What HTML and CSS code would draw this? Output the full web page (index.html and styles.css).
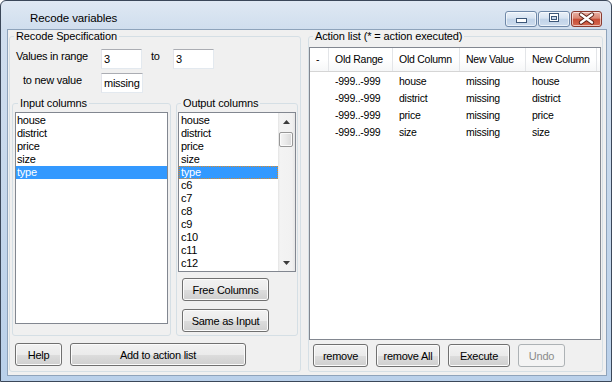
FILE: index.html
```html
<!DOCTYPE html>
<html>
<head>
<meta charset="utf-8">
<link rel="stylesheet" href="styles.css">
</head>
<body>
<div class="window">
  <div class="titlebar">
    <div class="title">Recode variables</div>
    <div class="caption">
      <div class="cap cap-min"><svg width="30" height="14" viewBox="0 0 30 14"><rect x="10.5" y="6.5" width="10" height="4" fill="#fff" stroke="#3d5778"/></svg></div>
      <div class="cap cap-max"><svg width="30" height="14" viewBox="0 0 30 14"><rect x="10.5" y="1.5" width="9" height="8" fill="#fff" stroke="#3d5778"/><rect x="12.5" y="4.5" width="5" height="3" fill="#c9d8ea" stroke="#3d5778"/></svg></div>
      <div class="cap cap-close"><svg width="29" height="14" viewBox="0 0 29 14"><path d="M9 2.5 L20 10.5 M20 2.5 L9 10.5" stroke="#5a1e14" stroke-width="4.2" stroke-linecap="round"/><path d="M9 2.5 L20 10.5 M20 2.5 L9 10.5" stroke="#fff" stroke-width="2.4" stroke-linecap="round"/></svg></div>
    </div>
  </div>
  <div class="frame">
    <div class="client">
      <fieldset class="group spec">
        <legend>Recode Specification</legend>
        <div class="row r1">
          <span class="lbl l-range">Values in range</span>
          <div class="tb">3</div>
          <span class="lbl l-to">to</span>
          <div class="tb">3</div>
        </div>
        <div class="row r2">
          <span class="lbl l-new">to new value</span>
          <div class="tb tb-wide">missing</div>
        </div>
        <div class="cols">
          <fieldset class="group incol">
            <legend>Input columns</legend>
            <div class="listbox lb-in">
              <div class="item">house</div>
              <div class="item">district</div>
              <div class="item">price</div>
              <div class="item">size</div>
              <div class="item sel">type</div>
            </div>
          </fieldset>
          <fieldset class="group outcol">
            <legend>Output columns</legend>
            <div class="listbox lb-out">
              <div class="items">
                <div class="item">house</div>
                <div class="item">district</div>
                <div class="item">price</div>
                <div class="item">size</div>
                <div class="item sel focus">type</div>
                <div class="item">c6</div>
                <div class="item">c7</div>
                <div class="item">c8</div>
                <div class="item">c9</div>
                <div class="item">c10</div>
                <div class="item">c11</div>
                <div class="item">c12</div>
              </div>
              <div class="sb">
                <div class="sb-btn"><svg width="7" height="4" viewBox="0 0 7 4"><polygon points="0,4 3.5,0 7,4" fill="#3c3c3c"/></svg></div>
                <div class="sb-thumb"></div>
                <div class="sb-track"></div>
                <div class="sb-btn"><svg width="7" height="4" viewBox="0 0 7 4"><polygon points="0,0 3.5,4 7,0" fill="#3c3c3c"/></svg></div>
              </div>
            </div>
            <button class="btn btn-out btn-free">Free Columns</button>
            <button class="btn btn-out btn-same">Same as Input</button>
          </fieldset>
        </div>
        <div class="btnrow left-btns">
          <button class="btn btn-help">Help</button>
          <button class="btn btn-add">Add to action list</button>
        </div>
      </fieldset>
      <fieldset class="group actions">
        <legend>Action list (* = action executed)</legend>
        <div class="listview">
          <div class="lv-row lv-head">
            <div class="lv-cell">-</div>
            <div class="lv-cell">Old Range</div>
            <div class="lv-cell">Old Column</div>
            <div class="lv-cell">New Value</div>
            <div class="lv-cell">New Column</div>
            <div class="lv-cell lv-fill"></div>
          </div>
          <div class="lv-body">
            <div class="lv-row"><div class="lv-cell"></div><div class="lv-cell">-999..-999</div><div class="lv-cell">house</div><div class="lv-cell">missing</div><div class="lv-cell">house</div></div>
            <div class="lv-row"><div class="lv-cell"></div><div class="lv-cell">-999..-999</div><div class="lv-cell">district</div><div class="lv-cell">missing</div><div class="lv-cell">district</div></div>
            <div class="lv-row"><div class="lv-cell"></div><div class="lv-cell">-999..-999</div><div class="lv-cell">price</div><div class="lv-cell">missing</div><div class="lv-cell">price</div></div>
            <div class="lv-row"><div class="lv-cell"></div><div class="lv-cell">-999..-999</div><div class="lv-cell">size</div><div class="lv-cell">missing</div><div class="lv-cell">size</div></div>
          </div>
        </div>
        <div class="btnrow right-btns">
          <button class="btn btn-remove">remove</button>
          <button class="btn btn-removeall">remove All</button>
          <button class="btn btn-exec">Execute</button>
          <button class="btn btn-undo" disabled>Undo</button>
        </div>
      </fieldset>
    </div>
  </div>
</div>
</body>
</html>
```

FILE: styles.css
```css
* { box-sizing: border-box; }
html, body { margin: 0; padding: 0; background: #ffffff; }
body {
  font-family: "Liberation Sans", Arial, sans-serif;
  font-size: 11px;
  letter-spacing: -0.25px;
  color: #000;
}
.window {
  width: 612px;
  height: 382px;
  border: 1px solid #3b4759;
  border-radius: 6px 6px 0 0;
  background: linear-gradient(to bottom, #dfe8f3 0px, #d0deee 28px, #c3d6eb 60%, #b9d0ea 100%);
  display: flex;
  flex-direction: column;
  overflow: hidden;
}
.titlebar {
  height: 28px;
  flex: none;
  display: flex;
  align-items: flex-start;
  justify-content: space-between;
  padding: 0 9px 0 29px;
}
.title {
  padding-top: 9px;
  font-size: 11.5px;
  letter-spacing: -0.1px;
  line-height: 16px;
  color: #000;
}
.caption {
  display: flex;
  gap: 1px;
  margin-top: 10px;
}
.cap {
  height: 16px;
  border: 1px solid #6f88a8;
  border-radius: 3px;
  background: linear-gradient(to bottom, #eaf1f9 0%, #d7e3f1 45%, #c1d3e8 50%, #cddcee 100%);
  box-shadow: inset 0 0 0 1px rgba(255,255,255,0.6);
  display: flex;
  align-items: center;
  justify-content: center;
}
.cap svg { display: block; }
.cap-min { width: 32px; }
.cap-max { width: 32px; }
.cap-close {
  width: 31px;
  border-color: #8a3a2f;
  background: linear-gradient(to bottom, #e9b0a4 0%, #d98672 45%, #c74c35 50%, #d46a52 100%);
}
.frame {
  flex: 1;
  padding: 0 4px 5px 6px;
  display: flex;
}
.client {
  flex: 1;
  border: 1px solid #8ea3bb;
  background: #f0f0f0;
  display: flex;
  align-items: flex-start;
  gap: 7px;
  padding: 0 3px 3px 1px;
}
.group {
  margin: 0;
  padding: 0;
  min-width: 0;
  border: 1px solid #d5dfe5;
  border-radius: 3px;
}
.group > legend {
  padding: 0 2px;
  margin-left: 4px;
  line-height: 13px;
  font-size: 11px;
  letter-spacing: -0.12px;
}
.spec { width: 292px; height: 342px; }
.actions { width: 295px; height: 342px; }
.row {
  display: flex;
  align-items: flex-start;
  height: 20px;
}
.r1 { margin-top: 6px; padding-left: 6px; }
.r2 { margin-top: 4px; padding-left: 13px; }
.lbl { line-height: 13px; margin-top: 1px; white-space: nowrap; }
.l-range { width: 85px; }
.l-to { width: 22px; margin-left: 9px; }
.l-new { width: 78px; }
.tb {
  width: 41px;
  height: 20px;
  background: #fff;
  border: 1px solid;
  border-color: #abadb3 #e3e9ef #e3e9ef #e2e3ea;
  padding-left: 2px;
  line-height: 18px;
}
.tb-wide { width: 42px; }
.cols {
  display: flex;
  gap: 5px;
  margin: 4px 0 0 2px;
}
.incol { width: 159px; height: 239px; }
.incol > legend { margin-left: 5px; }
.outcol { width: 122px; height: 239px; }
.listbox {
  background: #fff;
  border: 1px solid #828790;
}
.lb-in {
  width: 153px;
  height: 212px;
  margin: 2px 0 0 2px;
  padding-top: 1px;
}
.item {
  height: 13px;
  line-height: 13px;
  padding-left: 1px;
  white-space: nowrap;
}
.item.sel { background: #3399ff; color: #fff; }
.item.focus { outline: 1px dotted #d88a2c; outline-offset: -1px; }
.lb-out {
  width: 118px;
  height: 160px;
  margin: 2px 0 0 1px;
  display: flex;
}
.items {
  flex: 1;
  padding-top: 1px;
  overflow: hidden;
}
.lb-out .item { padding-left: 2px; }
.sb {
  width: 17px;
  flex: none;
  display: flex;
  flex-direction: column;
  background: linear-gradient(to right, #e4e4e4 0px, #f3f3f3 2px, #f1f1f1 14px, #e6e6e6 17px);
}
.sb-btn {
  height: 17px;
  display: flex;
  align-items: center;
  justify-content: center;
}
.sb-btn svg { display: block; }
.sb-thumb {
  height: 15px;
  margin: 2px 2px 0 1px;
  border: 1px solid #979797;
  border-radius: 2px;
  background: linear-gradient(to right, #f4f4f4 0%, #e8e8e8 50%, #d8d8d8 100%);
  box-shadow: inset 0 0 0 1px #fafafa;
}
.sb-track { flex: 1; }
.btn {
  font-family: "Liberation Sans", Arial, sans-serif;
  font-size: 11px;
  letter-spacing: -0.25px;
  color: #000;
  height: 23px;
  padding: 0;
  border: 1px solid #707070;
  border-radius: 3px;
  background: linear-gradient(to bottom, #f2f2f2 0%, #ebebeb 50%, #dddddd 51%, #cfcfcf 100%);
  box-shadow: inset 0 0 0 1px #fbfbfb;
  display: block;
}
.btn:disabled {
  color: #8b8b8b;
  border-color: #adb2b5;
  background: #f4f4f4;
  box-shadow: none;
}
.btn-out { width: 87px; margin-left: 5px; }
.btn-free { margin-top: 6px; }
.btn-same { margin-top: 8px; }
.btnrow { display: flex; gap: 8px; }
.left-btns { margin: 7px 0 0 5px; }
.btn-help { width: 47px; }
.btn-add { width: 176px; }
.listview {
  width: 292px;
  height: 293px;
  margin-top: 4px;
  background: #fff;
  border: 1px solid #828790;
  font-size: 10.5px;
}
.lv-row {
  display: grid;
  grid-template-columns: 19px 64px 67px 66px 71px 1fr;
  white-space: nowrap;
}
.lv-head {
  height: 24px;
  border-bottom: 1px solid #d5d5d5;
  background: linear-gradient(to bottom, #ffffff 0%, #ffffff 50%, #f6f7f8 100%);
}
.lv-head .lv-cell {
  line-height: 23px;
  border-right: 1px solid #e3e5e8;
}
.lv-head .lv-fill { border-right: 0; }
.lv-cell { padding-left: 6px; overflow: hidden; }
.lv-body { padding-top: 1px; }
.lv-body .lv-row { height: 17px; line-height: 17px; }
.right-btns { margin: 4px 0 0 4px; }
.btn-remove { width: 55px; }
.btn-removeall { width: 64px; }
.btn-exec { width: 62px; }
.btn-undo { width: 47px; }
```
